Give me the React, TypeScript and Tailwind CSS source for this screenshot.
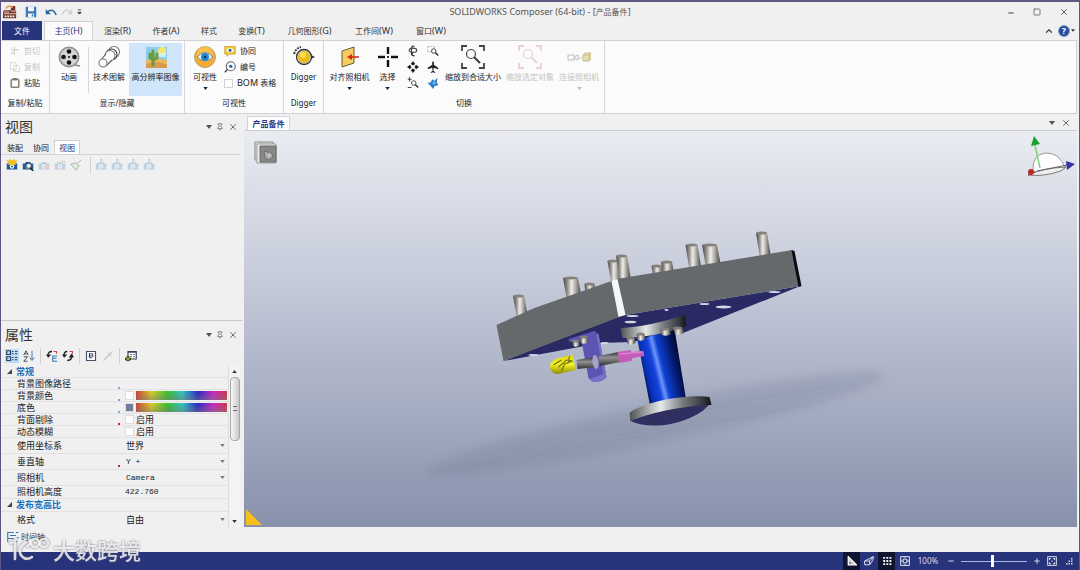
import { useState } from "react";
import type { ReactNode } from "react";
import { ChevronUp, Minus, Pin, Plus, Square, X } from "lucide-react";

const MENUS = [
  { label: "渲染", hotkey: "(R)", width: "w-[49px]" },
  { label: "作者", hotkey: "(A)", width: "w-[48px]" },
  { label: "样式", hotkey: "", width: "w-[38px]" },
  { label: "变换", hotkey: "(T)", width: "w-[47px]" },
  { label: "几何图形", hotkey: "(G)", width: "w-[69px]" },
  { label: "工作间", hotkey: "(W)", width: "w-[60px]" },
  { label: "窗口", hotkey: "(W)", width: "w-[54px]" },
];

const PINS = [
  { x: 519, y: 296, dx: 4, h: 22, w: 11 },
  { x: 571, y: 278, dx: 4, h: 22, w: 15 },
  { x: 590, y: 284, dx: 1, h: 10, w: 10 },
  { x: 613, y: 261, dx: 4, h: 23, w: 10 },
  { x: 622, y: 256, dx: 4, h: 25, w: 11 },
  { x: 667, y: 262, dx: 2, h: 13, w: 11 },
  { x: 657, y: 266, dx: 2, h: 11, w: 10 },
  { x: 692, y: 245, dx: 4, h: 25, w: 12 },
  { x: 710, y: 245, dx: 4, h: 22, w: 15 },
  { x: 762, y: 233, dx: 4, h: 25, w: 11 },
];

const BOLTS = [
  { x: 631, y: 338, dx: 1, h: 6, w: 8 },
  { x: 641, y: 334, dx: 1, h: 6, w: 8 },
  { x: 665, y: 329, dx: 2, h: 6, w: 9 },
  { x: 678, y: 328, dx: 2, h: 6, w: 9 },
  { x: 576, y: 341, dx: 1, h: 5, w: 7 },
  { x: 584, y: 337, dx: 1, h: 6, w: 8 },
];

type IconProps = { children: ReactNode; box?: string; className?: string };

function Icon({ children, box = "0 0 16 16", className = "size-3" }: IconProps) {
  return (
    <svg viewBox={box} className={`shrink-0 ${className}`} fill="none" aria-hidden="true">
      {children}
    </svg>
  );
}

function Caret({ className = "text-gray-600", size = "h-1 w-1.5" }: { className?: string; size?: string }) {
  return (
    <Icon box="0 0 6 4" className={`${size} ${className}`}>
      <path d="M0 0h6L3 4z" fill="currentColor" />
    </Icon>
  );
}

function BigButton({ icon, label, width, caret, disabled, active }: {
  icon: ReactNode; label: string; width: string; caret?: boolean; disabled?: boolean; active?: boolean;
}) {
  return (
    <button
      type="button"
      disabled={disabled}
      className={`flex h-[53px] shrink-0 flex-col items-center pt-0.5 ${width} ${active ? "bg-[#cfe6fa]" : ""} ${disabled ? "text-[#c4c4c4]" : "text-[#222]"}`}
    >
      <span className="flex h-6 items-center">{icon}</span>
      <span className="mt-0.5 whitespace-nowrap text-[8px] leading-3">{label}</span>
      {caret && <Caret size="h-[3px] w-[5px]" className={`mt-1 ${disabled ? "text-[#bbb]" : "text-[#1c2352]"}`} />}
    </button>
  );
}

function Group({ label, width, children }: { label: string; width: string; children: ReactNode }) {
  return (
    <section className={`flex shrink-0 flex-col border-r border-[#d8d8dc] ${width}`}>
      <div className="flex flex-1 justify-center pt-0.5">{children}</div>
      <h2 className="h-[17px] text-center text-[8px] leading-[14px]">{label}</h2>
    </section>
  );
}

function SmallButton({ icon, label, disabled }: { icon: ReactNode; label: ReactNode; disabled?: boolean }) {
  return (
    <button type="button" disabled={disabled} className={`flex h-4 items-center gap-1 whitespace-nowrap text-[8px] ${disabled ? "text-[#c4c4c4]" : ""}`}>
      {icon}
      {label}
    </button>
  );
}

function IconButton({ label, children }: { label: string; children: ReactNode }) {
  return (
    <button type="button" aria-label={label} className="flex h-4 w-5 items-center justify-center">
      {children}
    </button>
  );
}

function Magnifier({ color = "#444" }: { color?: string }) {
  return (
    <Icon box="0 0 24 24" className="size-6">
      <path d="M1 6V1h5M18 1h5v5M23 18v5h-5M6 23H1v-5" stroke={color} strokeWidth="1.8" />
      <circle cx="10" cy="9" r="4.5" stroke={color} strokeWidth="1.2" />
      <path d="m13 12 6 6" stroke={color} strokeWidth="2.2" />
    </Icon>
  );
}

function Ribbon() {
  return (
    <div className="mr-0.5 flex h-[74px] shrink-0 overflow-hidden border-y border-r border-[#d0d0d6] bg-[#fbfbfc] text-[#222]">
      <Group label="复制/粘贴" width="w-[49px]">
        <div className="flex flex-col">
          <SmallButton disabled label="剪切" icon={<Icon className="size-2.5"><path d="M7 1v13M1 6h13M5 10l-3 3" stroke="#ccc" strokeWidth="1.8" /></Icon>} />
          <SmallButton disabled label="复制" icon={<Icon className="size-2.5"><path d="M1 1h7l2 3v8H1zM6 5h6l3 3v7H6z" fill="#fff" stroke="#ccc" strokeWidth="1.3" /></Icon>} />
          <SmallButton label="粘贴" icon={<Icon className="size-2.5"><rect x="2" y="2" width="12" height="13" rx="2" fill="#fff" stroke="#8a826f" strokeWidth="2.6" /><path d="M5 0h6v4H5z" fill="#777" /></Icon>} />
        </div>
      </Group>
      <Group label="显示/隐藏" width="w-[135px]">
        <BigButton width="w-[38px]" label="动画" icon={
          <Icon box="0 0 24 24" className="size-6">
            <circle cx="12" cy="12" r="10" fill="#aaa" stroke="#888" />
            <circle cx="12" cy="12" r="8.5" fill="#d5d5d5" />
            <g fill="#111"><circle cx="12" cy="6.500" r="2.300" /><circle cx="12" cy="17.500" r="2.300" /><circle cx="6.5" cy="12" r="2.300" /><circle cx="17.500" cy="12" r="2.300" /><circle cx="12" cy="12" r="1" /></g>
            <path d="m18 20 5 1" stroke="#888" strokeWidth="1.5" />
          </Icon>
        } />
        <span className="mt-1 h-[46px] w-px bg-[#d8d8dc]" />
        <BigButton width="w-10" label="技术图解" icon={
          <Icon box="0 0 24 24" className="size-6">
            <g fill="#fff" stroke="#777" strokeWidth="1.1">
              <circle cx="17" cy="7" r="5.5" /><circle cx="14.5" cy="9.5" r="5.5" stroke="#333" /><circle cx="13" cy="10.5" r="5" />
              <path d="m3 15 7-7 6 6-7 7z" stroke="none" /><path d="m3 16 6-7M9 21l6-6" stroke="#555" /><circle cx="6" cy="18" r="4" />
            </g>
          </Icon>
        } />
        <BigButton width="w-[53px] mr-0.5" active label="高分辨率图像" icon={
          <Icon box="0 0 24 24" className="size-6">
            <path d="M2 2h21v21H2z" fill="#8fccea" />
            <path d="M2 15q10-3 21 0v8H2z" fill="#e9b75f" /><path d="M2 19q12-4 21 1v3H2z" fill="#d8984d" />
            <circle cx="18" cy="6" r="4" fill="#f7e56b" /><path d="M12 8h7l3-2v6h-8z" fill="#d9f2f5" opacity=".8" />
            <path d="M9 20V6M6 9v4l3 2 4-2V9" stroke="#6a9c3f" strokeWidth="3" strokeLinecap="round" />
          </Icon>
        } />
      </Group>
      <Group label="可视性" width="w-[99px]">
        <BigButton width="w-[38px]" caret label="可视性" icon={
          <Icon box="0 0 24 24" className="size-6">
            <circle cx="12" cy="12" r="10.5" fill="#f5a92d" stroke="#b7a27c" /><circle cx="12" cy="9" r="8" fill="#ffd368" opacity=".5" />
            <path d="M4 12q8-9 16 0-8 8-16 0z" fill="#eaf5fa" stroke="#74889b" /><circle cx="12" cy="12" r="4" fill="#2a8ac8" /><circle cx="12" cy="12" r="1.5" fill="#113a67" />
          </Icon>
        } />
        <div className="mr-0.5 flex w-[56px] flex-col">
          <SmallButton label="协同" icon={<Icon><path d="M1 2h14v10H7l-3 3v-3H1z" fill="#f3c843" stroke="#c99b20" /><ellipse cx="8" cy="7" rx="4.5" ry="2.7" fill="#fff" /><circle cx="8" cy="7" r="2" fill="#1b63a5" /></Icon>} />
          <SmallButton label="编号" icon={<Icon><circle cx="9" cy="7" r="6" fill="#fff" stroke="#667" strokeWidth="1.5" /><path d="m5 11-4 4" stroke="#333" strokeWidth="1.5" /><path d="M5 7q4-4 8 0-4 4-8 0z" fill="#bcdff3" /><circle cx="9" cy="7" r="2" fill="#205c9f" /></Icon>} />
          <label className="flex h-4 items-center gap-1 whitespace-nowrap text-[8px]">
            <input type="checkbox" className="size-[9px] shrink-0 appearance-none border border-[#d4d4d4] bg-white" />
            <span><span className="text-[9px]">BOM</span> 表格</span>
          </label>
        </div>
      </Group>
      <Group label="Digger" width="w-10">
        <BigButton width="w-9" label="Digger" icon={
          <Icon box="0 0 24 24" className="size-6">
            <circle cx="12" cy="12" r="7.500" fill="#ddd" stroke="#333" strokeWidth="1.3" /><circle cx="12" cy="12" r="6" fill="#edb916" /><circle cx="11" cy="10" r="3" fill="#ffdd54" />
            <path d="M2 9q2-6 7-7" stroke="#333" strokeWidth="1.800" strokeDasharray="2 1" /><path d="m19 10 4 2-4 2z" fill="#333" />
          </Icon>
        } />
      </Group>
      <Group label="切换" width="w-[281px]">
        <BigButton width="w-[46px]" caret label="对齐照相机" icon={
          <Icon box="0 0 24 24" className="size-6">
            <path d="m4 6 12-4v16L4 22z" fill="#f6cb60" stroke="#665c3c" /><path d="M21 12H11" stroke="#d42a18" strokeWidth="1.600" /><path d="m9 12 5-3v6z" fill="#d42a18" />
          </Icon>
        } />
        <BigButton width="w-[30px]" caret label="选择" icon={
          <Icon box="0 0 24 24" className="size-6"><path d="M12 2v7M12 15v7M2 12h7M15 12h7" stroke="#111" strokeWidth="2.4" /><path d="M11 11h2v2h-2z" fill="#333" /></Icon>
        } />
        <div className="grid grid-cols-2 content-start">
          <IconButton label="旋转"><Icon><path d="M10 2Q7 0 6 4v8q1 3 4 2M8 10l-2 3 4 2" stroke="#333" strokeWidth="1.5" /><ellipse cx="8" cy="7" rx="5" ry="2.800" stroke="#444" strokeWidth="1.5" /></Icon></IconButton>
          <IconButton label="缩放区域"><Icon><path d="M1 2h9v7H1z" stroke="#4a74ad" strokeDasharray="1 1.5" /><circle cx="9" cy="8" r="3" fill="#fff" stroke="#444" strokeWidth="1.3" /><path d="m11 10 4 4" stroke="#333" strokeWidth="2" /></Icon></IconButton>
          <IconButton label="平移"><Icon><g fill="#222"><path d="m8 0 3 4-3 2-3-2zM8 16l3-4-3-2-3 2zM0 8l4-3 2 3-2 3zM16 8l-4-3-2 3 2 3z" /></g></Icon></IconButton>
          <IconButton label="飞行"><Icon><path d="M8 0q2 2 1 5l6 4v2L9 9l-.5 4 2.5 2v1l-3-1-3 1v-1l2.5-2L7 9l-6 2V9l6-4q-1-3 1-5z" fill="#222" /></Icon></IconButton>
          <IconButton label="缩放"><Icon><path d="M1 3h5M3.500 0v6M1 14h5" stroke="#333" strokeWidth="1.2" /><circle cx="9" cy="8" r="3" stroke="#555" strokeWidth="1.3" /><path d="m11 10 4 4" stroke="#333" strokeWidth="2" /></Icon></IconButton>
          <IconButton label="漫游"><Icon><path d="m7 3 3 2 4-4-1 6 2 4-5 1-2 4-3-4-4-4 4-1z" fill="#2879c8" /><path d="m8 5 1 3-4 1 5 1 2-3z" fill="#7dbdec" /></Icon></IconButton>
        </div>
        <BigButton width="w-[61px]" label="缩放到合适大小" icon={<Magnifier />} />
        <BigButton width="w-[53px]" disabled label="缩放选定对象" icon={<Magnifier color="#ead2d2" />} />
        <BigButton width="w-[45px]" disabled caret label="连接照相机" icon={
          <Icon box="0 0 24 24" className="size-6"><path d="M1 10h6v5H1zM7 12l4-2v5l-4-2" stroke="#bbb" /><path d="M12 13h3" stroke="#aaa" strokeDasharray="1 1" /><path d="m16 10 2-2h6v6l-2 2h-6z" fill="#e6dfad" stroke="#c5bd90" /><path d="M16 10h6v6M22 10l2-2" stroke="#c5bd90" /></Icon>
        } />
      </Group>
    </div>
  );
}

function PanelTitle({ children }: { children: ReactNode }) {
  return (
    <div className="flex h-[22px] shrink-0 items-center justify-between px-1">
      <h2 className="text-[14px] leading-5 text-[#333]">{children}</h2>
      <div className="flex items-center gap-1 text-[#555]">
        <button type="button" aria-label="面板菜单" className="flex"><Caret /></button>
        <button type="button" aria-label="固定"><Pin className="size-2" /></button>
        <button type="button" aria-label="关闭"><X className="size-2.5" /></button>
      </div>
    </div>
  );
}

function CameraIcon({ faded, extra }: { faded?: boolean; extra?: ReactNode }) {
  const color = faded ? "#bfd0de" : "#205b93";
  return (
    <Icon>
      <path d="M1 6h3l1-2h6l1 2h3v8H1z" fill={color} />
      <circle cx="8" cy="10" r="3" fill="#f2f6f9" />
      <circle cx="8" cy="10" r="1.300" fill={color} />
      {extra}
    </Icon>
  );
}

function ViewsPanel() {
  const [tab, setTab] = useState("视图");
  return (
    <section className="flex min-h-0 flex-1 flex-col border-b border-[#c9c9cc] pt-px">
      <PanelTitle>视图</PanelTitle>
      <div className="mr-0.5 mt-px flex h-4 shrink-0 items-end border-b border-[#d5d5d5] pl-px text-[8px]">
        {["装配", "协同", "视图"].map((name) => (
          <button
            key={name}
            type="button"
            onClick={() => setTab(name)}
            className={`h-[14px] w-[26px] leading-[13px] ${tab === name ? "border border-b-0 border-[#d0d0d0] bg-white text-[#2b3a80]" : "text-[#222]"}`}
          >
            {name}
          </button>
        ))}
      </div>
      <div className="flex h-5 shrink-0 items-center gap-1 pl-[5px]">
        <button type="button" aria-label="创建视图"><CameraIcon extra={<path d="m8 2 3-2 1 2h4l-4 4 1 2H3l1-2-4-4h4l1-2z" fill="#f2bd20" />} /></button>
        <button type="button" aria-label="创建照相机视图"><CameraIcon extra={<><circle cx="9" cy="9" r="3.500" fill="#dce9f4" stroke="#234" /><path d="m11 12 4 4" stroke="#123" strokeWidth="2" /></>} /></button>
        <button type="button" aria-label="更新视图"><CameraIcon faded extra={<circle cx="12" cy="11" r="3" fill="#edc9ce" />} /></button>
        <button type="button" aria-label="更新多个视图"><CameraIcon faded extra={<path d="M9 2h6v4H9z" fill="#eadbdb" />} /></button>
        <button type="button" aria-label="绘制"><Icon><path d="m1 7 7-2 4 4-4 6zM10 6l5-5" fill="#e6eae2" stroke="#aab5aa" strokeWidth="1.300" /></Icon></button>
        <span className="ml-1 h-4 w-px bg-[#d0d0d0]" />
        {["第一", "上一", "下一", "最后"].map((name) => (
          <button key={name} type="button" aria-label={name}><CameraIcon faded extra={<path d="M7 0h3v3H7z" fill="#bfd0de" />} /></button>
        ))}
      </div>
      <div className="flex-1" />
    </section>
  );
}

const ROW = "flex shrink-0 items-center border-b border-[#e2e2e4]";

function PropRow({ label, height = "h-3", dot, htmlFor, children }: {
  label: string; height?: string; dot?: string; htmlFor?: string; children?: ReactNode;
}) {
  return (
    <div className={`${ROW} ${height}`}>
      <label htmlFor={htmlFor} className="flex w-[124px] shrink-0 items-end pl-4">
        <span className="flex-1">{label}</span>
        {dot && <span className={`mr-[5px] size-0.5 ${dot}`} />}
      </label>
      {children}
    </div>
  );
}

function ColorValue({ id, swatch }: { id: string; swatch: string }) {
  return (
    <button id={id} type="button" className="mr-px flex h-[9px] flex-1 gap-0.5">
      <span className={`w-[9px] border border-[#ddd] ${swatch}`} />
      <span className="flex-1 bg-[linear-gradient(to_bottom,transparent,#7778),linear-gradient(to_right,#d43c35,#dfcf22_17%,#35c42c_35%,#32c5c9_51%,#2424c8_68%,#cf25c9_85%,#d53343)]" />
    </button>
  );
}

function CheckValue({ id }: { id: string }) {
  return (
    <span className="flex items-center gap-0.5">
      <input id={id} type="checkbox" className="size-[9px] appearance-none border border-[#ddd] bg-white" />
      启用
    </span>
  );
}

function SelectValue({ id, option, mono }: { id: string; option: string; mono?: boolean }) {
  return (
    <span className="flex flex-1 items-center pr-[3px]">
      <select id={id} className={`min-w-0 flex-1 appearance-none bg-transparent pl-px ${mono ? "font-['Liberation_Mono',monospace] text-[8px]" : ""}`}>
        <option>{option}</option>
      </select>
      <Caret size="h-[3px] w-[5px]" className="text-[#777]" />
    </span>
  );
}

function Section({ children, height }: { children: ReactNode; height: string }) {
  return (
    <button type="button" className={`${ROW} ${height} w-full gap-1 pl-1.5 font-bold text-[#1a72bb]`}>
      <Icon box="0 0 6 6" className="size-[5px]"><path d="M6 0v6H0z" fill="#444" /></Icon>
      {children}
    </button>
  );
}

function PropertiesPanel() {
  return (
    <section className="flex min-h-0 flex-1 flex-col pt-[3px]">
      <PanelTitle>属性</PanelTitle>
      <div className="flex h-5 shrink-0 items-center gap-1 pl-1">
        <button type="button" aria-label="分类" className="bg-[#bcdcf5] p-px"><Icon><path d="M1 1h5v5H1zM1 9h5v5H1zM8 2h2M12 2h3M8 5h2M12 5h3M8 10h2M12 10h3M8 13h2M12 13h3" stroke="#23405f" strokeWidth="1.600" /></Icon></button>
        <button type="button" aria-label="按字母排序">
          <Icon><g stroke="#345" strokeWidth="1.200"><path d="m1 7 3-6 3 6M2 5h4M1 9h5l-5 6h5" /><path d="M12 1v12M9 10l3 4 3-4" stroke="#3869a8" /></g></Icon>
        </button>
        <span className="mx-px h-4 w-px bg-[#d0d0d0]" />
        <button type="button" aria-label="重置"><Icon><path d="M8 2Q2 2 3 8M1 6l2 3 3-3" stroke="#222" strokeWidth="1.800" /><path d="M10 2h4v3" stroke="#c44" strokeWidth="1.500" /><path d="M15 8H9v7h6M9 11h5" stroke="#347fb7" strokeWidth="1.500" /></Icon></button>
        <button type="button" aria-label="刷新"><Icon><path d="M7 2Q2 2 3 8M1 6l2 3 3-3M7 14q6 0 6-6M10 10l3-4 2 4" stroke="#222" strokeWidth="1.800" /><path d="M10 2h4v3" stroke="#c44" strokeWidth="1.500" /></Icon></button>
        <span className="mx-px h-4 w-px bg-[#d0d0d0]" />
        <button type="button" aria-label="设为默认"><Icon><path d="M2 2h12v12H2z" fill="#fff" stroke="#456" strokeWidth="1.600" /><path d="M7 5h3q2 4-2 6-4-1-2-4M6 4v4h3" stroke="#235" strokeWidth="1.300" /></Icon></button>
        <button type="button" aria-label="拾取" className="ml-px"><Icon><path d="m2 14 8-8M8 4l4 4M11 5l3-3" stroke="#c8c8c8" strokeWidth="1.800" /></Icon></button>
        <span className="mx-px h-4 w-px bg-[#d0d0d0]" />
        <button type="button" aria-label="添加元属性"><Icon><path d="M4 2h11v10H4z" fill="#fff" stroke="#345" strokeWidth="1.500" /><path d="M4 3h11M7 6h2M11 6h2M7 9h2M11 9h2" stroke="#345" strokeWidth="1.500" /><path d="M4 8v7M0 12h8" stroke="#222" strokeWidth="3.500" /><path d="M4 9v5M1 12h6" stroke="#b2ca29" strokeWidth="1.500" /></Icon></button>
      </div>
      <div className="flex min-h-0 flex-1 text-[9px] leading-[11px] text-[#222]">
        <div className="min-w-0 flex-1 overflow-hidden">
          <Section height="h-3">常规</Section>
          <PropRow label="背景图像路径" dot="bg-[#7fa6da]" />
          <PropRow label="背景颜色" dot="bg-[#7fa6da]" htmlFor="bg-color"><ColorValue id="bg-color" swatch="bg-white" /></PropRow>
          <PropRow label="底色" dot="bg-[#7fa6da]" htmlFor="base-color"><ColorValue id="base-color" swatch="bg-[#727d99]" /></PropRow>
          <PropRow label="背面剔除" dot="bg-[#d2202e]" htmlFor="culling"><CheckValue id="culling" /></PropRow>
          <PropRow label="动态模糊" htmlFor="blur"><CheckValue id="blur" /></PropRow>
          <PropRow label="使用坐标系" height="h-4" htmlFor="axes"><SelectValue id="axes" option="世界" /></PropRow>
          <PropRow label="垂直轴" height="h-4" dot="bg-[#d2202e]" htmlFor="vertical"><SelectValue id="vertical" option="Y +" mono /></PropRow>
          <PropRow label="照相机" height="h-4" htmlFor="camera"><SelectValue id="camera" option="Camera" mono /></PropRow>
          <PropRow label="照相机高度" height="h-[13px]" htmlFor="camera-height">
            <input id="camera-height" defaultValue="422.760" className="min-w-0 flex-1 bg-transparent font-['Liberation_Mono',monospace] text-[8px]" />
          </PropRow>
          <Section height="h-[13px]">发布宽高比</Section>
          <PropRow label="格式" height="h-4" htmlFor="format"><SelectValue id="format" option="自由" /></PropRow>
        </div>
        <div className="mr-0.5 flex w-3 shrink-0 flex-col items-center border-l border-[#ddd] bg-[#f3f3f3]">
          <Caret size="h-[3px] w-[5px]" className="my-1 rotate-180 text-[#333]" />
          <div className="flex h-16 w-2.5 items-center justify-center rounded-sm border border-[#a5a5a8] bg-linear-to-r from-[#f7f7f7] to-[#c9c9cc]">
            <span className="h-[5px] w-1 border-y border-[#875f66]" />
          </div>
          <Caret size="h-[3px] w-[5px]" className="mb-1 mt-auto text-[#333]" />
        </div>
      </div>
    </section>
  );
}

function Cylinder({ x, y, dx, h, w }: { x: number; y: number; dx: number; h: number; w: number }) {
  const r = w / 2;
  return (
    <g>
      <path d={`M${x - r} ${y}L${x + dx - r} ${y + h}Q${x + dx} ${y + h + 2} ${x + dx + r} ${y + h - 1}L${x + r} ${y}z`} fill="url(#steel)" />
      <ellipse cx={x} cy={y} rx={r} ry="1.500" fill="#85827e" />
    </g>
  );
}

function Model() {
  return (
    <svg viewBox="245 131 832 396" className="h-full w-full" role="img" aria-label="产品备件模型">
      <defs>
        <linearGradient id="steel">
          <stop stopColor="#45423f" /><stop offset=".22" stopColor="#8f8c88" /><stop offset=".45" stopColor="#efede9" /><stop offset=".65" stopColor="#b5b2ad" /><stop offset="1" stopColor="#3c3936" />
        </linearGradient>
        <linearGradient id="flange">
          <stop stopColor="#4d5052" /><stop offset=".38" stopColor="#e8eaea" /><stop offset=".65" stopColor="#777b7e" /><stop offset=".9" stopColor="#33363a" /><stop offset="1" stopColor="#111" />
        </linearGradient>
        <linearGradient id="shaft" gradientUnits="userSpaceOnUse" x1="643" y1="377" x2="684" y2="367">
          <stop stopColor="#04124d" /><stop offset=".12" stopColor="#0530b8" /><stop offset=".32" stopColor="#1544dd" /><stop offset=".42" stopColor="#6d95f5" /><stop offset=".52" stopColor="#1041d4" /><stop offset=".8" stopColor="#041a70" /><stop offset="1" stopColor="#010824" />
        </linearGradient>
        <linearGradient id="rod" x2="0" y2="1">
          <stop stopColor="#333" /><stop offset=".4" stopColor="#929292" /><stop offset="1" stopColor="#303033" />
        </linearGradient>
        <linearGradient id="yellow" x2="0" y2="1">
          <stop stopColor="#dddb16" /><stop offset=".5" stopColor="#f2ef25" /><stop offset="1" stopColor="#8d8b08" />
        </linearGradient>
        <filter id="soft" x="-10%" y="-100%" width="120%" height="300%">
          <feGaussianBlur stdDeviation="5" />
        </filter>
      </defs>
      <ellipse cx="655" cy="424" rx="235" ry="20" fill="#69718a" opacity=".22" transform="rotate(-12 655 424)" filter="url(#soft)" />
      <g stroke="#747e96" strokeWidth=".6" opacity=".16">
        <path d="m435 472 430-86M470 468l370-70M490 464l320-58M520 444l310-58M560 434l240-44" />
        <path d="m520 450 50 10M560 440l60 13M600 430l70 13M650 418l65 12M700 407l60 12M750 396l50 10" />
      </g>
      {PINS.map((pin) => <Cylinder key={pin.x} {...pin} />)}
      <path d="m504 361 115-45 7-1 175-29-115 46-54 10-31 1z" fill="#292963" />
      <path d="m497 325 38-17 77-27 8 36-116 44z" fill="#65696c" />
      <path d="m617 279 176-29 8 36-175 29z" fill="#65696c" />
      <path d="m612 281 6-2 8 36-7 2z" fill="#f6f6f7" />
      <path d="m792 250 3 1 7 35-3 1z" fill="#090a12" />
      <g fill="#d5d5e8">
        <ellipse cx="534" cy="355" rx="5" ry="1" /><ellipse cx="633" cy="316" rx="6" ry="1" /><ellipse cx="631" cy="322" rx="6" ry="1.300" />
        <ellipse cx="705" cy="304" rx="5" ry="1" /><ellipse cx="724" cy="307" rx="8" ry="1.400" /><ellipse cx="775" cy="292" rx="6" ry="1" />
        <ellipse cx="605" cy="343" rx="4" ry="1" /><ellipse cx="667" cy="310" rx="2" ry="1" />
      </g>
      <path d="m638 340 37-11 12 73q-16 8-36 6z" fill="url(#shaft)" />
      <path d="M621 328q27-1 64-13l2 11q-29 11-64 12z" fill="url(#flange)" />
      {BOLTS.slice(0, 4).map((bolt) => <Cylinder key={bolt.x} {...bolt} />)}
      <path d="m569 339 26-8 4 3 8 43q-3 5-14 5l-4-4-7-37-12 1z" fill="#5e55b2" />
      <path d="m599 334 8 43q-3 5-14 5l-3-3 14-5-7-39z" fill="#7770c4" />
      <Cylinder {...BOLTS[4]} />
      <Cylinder {...BOLTS[5]} />
      <path d="m577 360 18-3 2 10-19 2z" fill="url(#rod)" />
      <ellipse cx="596" cy="362" rx="3" ry="7" fill="#a5a2c9" transform="rotate(-8 596 362)" />
      <path d="m599 356 20-4 2 10-21 4z" fill="url(#rod)" />
      <path d="m618 352 13-2 1 2 12-1 1 5-12 2-1 3-12 2z" fill="#c65cba" />
      <path d="m620 354 23-2" stroke="#dc82d0" strokeWidth="1.500" />
      <path d="M551 370q-3-8 8-12l14-3 1 4 2 11-13 3q-8 3-12-3z" fill="url(#yellow)" />
      <path d="m559 367 8-7 6 1M562 371l3-7 8-3M554 365l8-5M570 356l-1 6" stroke="#716e08" strokeWidth="1.100" fill="none" />
      <path d="M631 419c15-10 58-17 80-16-14 19-57 29-80 18z" fill="#2f2f61" />
      <path d="M630 413c15-12 60-19 80-16l2 8c-20 0-57 6-81 16z" fill="url(#flange)" />
    </svg>
  );
}

function Viewport() {
  return (
    <main className="relative min-h-0 flex-1 overflow-hidden bg-[linear-gradient(#eaecf2,#c3c8d8_40%,#8791ab)]">
      <Model />
      <button type="button" aria-label="模式" className="absolute left-2.5 top-2.5">
        <Icon box="0 0 24 24" className="size-6">
          <path d="M1 1h18v18H1z" fill="#ddd" stroke="#888" /><path d="M3 3h19v19H3z" fill="#f2f2f2" stroke="#999" /><path d="M6 5h16v16H6z" fill="#888" stroke="#666" />
          <path d="m10 11 3-1 1 3 4-1 1 4-4 3-4-2z" fill="#a9a9a9" stroke="#666" strokeWidth=".8" /><circle cx="15" cy="14" r="2" fill="#c4c4c4" />
        </Icon>
      </button>
      <svg viewBox="0 0 54 46" className="absolute right-0 top-0.5 h-[46px] w-[54px]" role="img" aria-label="坐标轴">
        <path d="M10 38q-1-17 13-18 14 0 19 15-13 8-32 3z" fill="#fff" stroke="#999" />
        <path d="M5 42q15-7 38-8l-5 4q-18 6-33 4z" fill="#eee" stroke="#777" />
        <path d="m17 35-5-23" stroke="#7ad57a" strokeWidth="1.500" /><path d="m11 3 6 8-9 2z" fill="#16a12a" />
        <path d="m14 38 30-6" stroke="#666" /><path d="m43 28 9 3-8 6z" fill="#3434a6" />
        <circle cx="8" cy="39" r="3" fill="#bc2727" /><path d="m7 38 5 1-7 4z" fill="#bc2727" />
      </svg>
      <button type="button" aria-label="纸张角" className="absolute bottom-0.5 left-0.5 flex">
        <Icon className="size-4"><path d="M0 0v16h16z" fill="#f9be19" /></Icon>
      </button>
    </main>
  );
}

function StatusBar() {
  return (
    <footer className="flex h-[18px] shrink-0 items-center justify-end bg-[#27337b] pr-1.5 text-[8px] text-[#d5d9ef]">
      <button type="button" aria-label="技术图解模式" className="flex h-full w-[17px] items-center justify-center bg-[#10142f]"><Icon className="size-2.5"><path d="M2 1v13h13z" stroke="#fff" strokeWidth="2" fill="#ccd" /><path d="M4 9v3h3z" fill="#10142f" /></Icon></button>
      <button type="button" aria-label="设计模式" className="flex h-full w-[18px] items-center justify-center"><Icon className="size-2.5"><path d="M1 8h8v6H1zM1 8l6-3 8-4-1 6-5 7M9 8l6-7" stroke="#dde" strokeWidth="1.600" /></Icon></button>
      <button type="button" aria-label="网格" className="flex h-full w-[17px] items-center justify-center bg-[#10142f]"><Icon className="size-2.5"><path d="M2 3h13M2 8h13M2 13h13" stroke="#fff" strokeWidth="3" strokeDasharray="3 2" /></Icon></button>
      <button type="button" aria-label="纸张" className="flex h-full w-5 items-center justify-center"><Icon className="size-2.5"><path d="M1 1h14v14H1zM5 5h6v6H5zM1 8h4M11 8h4M8 1v2M8 13v2" stroke="#e2e5f5" strokeWidth="1.600" /></Icon></button>
      <span className="w-[26px] text-center">100%</span>
      <button type="button" aria-label="缩小" className="ml-1 mr-1 p-0.5"><Minus className="size-2" strokeWidth={3} /></button>
      <input
        type="range"
        aria-label="缩放比例"
        defaultValue="48"
        className="h-3 w-[66px] appearance-none bg-[linear-gradient(#aeb7dd,#aeb7dd)] bg-[length:100%_1px] bg-center bg-no-repeat [&::-webkit-slider-thumb]:h-3 [&::-webkit-slider-thumb]:w-[3px] [&::-webkit-slider-thumb]:appearance-none [&::-webkit-slider-thumb]:bg-white"
      />
      <button type="button" aria-label="放大" className="ml-1 mr-1 p-0.5"><Plus className="size-2" strokeWidth={3} /></button>
      <button type="button" aria-label="适合窗口" className="mr-2"><Icon className="size-2.5"><path d="M1 1h14v14H1z" stroke="#e2e5f5" strokeWidth="1.500" /><path d="M3 3h4L3 7zM13 3H9l4 4zM3 13h4L3 9zM13 13H9l4-4z" fill="#e2e5f5" /><path d="M7 7h2v2H7z" fill="#e2e5f5" /></Icon></button>
      <Icon className="size-2"><path d="M12 2h3v3h-3zM7 7h3v3H7zM12 7h3v3h-3zM2 12h3v3H2zM7 12h3v3H7zM12 12h3v3h-3z" fill="#d5d9ef" /></Icon>
    </footer>
  );
}

export default function App() {
  return (
    <div className="relative flex h-screen flex-col overflow-hidden border-x border-t-2 border-[#5d5683] bg-[#f0f0f1] font-['Noto_Sans','Noto_Sans_CJK_SC',sans-serif] text-[#333]">
      <header className="flex h-[19px] shrink-0 items-center px-0.5">
        <div className="flex flex-1 items-center gap-1">
          <Icon className="size-3.5"><path d="M1 6h8V1h5v5h1v9H0V8z" fill="#743326" /><path d="M3 4q4-5 8-1" stroke="#e4a062" strokeWidth="2" /><path d="M1 8h6M9 7h6M1 10h14" stroke="#ecd7c5" /><path d="M2 13h12" stroke="#fff" strokeWidth="2" strokeDasharray="2 1" /></Icon>
          <button type="button" aria-label="保存" className="ml-1"><Icon><path d="M1 1h14v14H1z" fill="#3a78b8" /><path d="M4 1h8v6H4zM4 10h8v5H4z" fill="#f4f8fc" /><path d="M9 11h2v3H9z" fill="#3a78b8" /></Icon></button>
          <button type="button" aria-label="撤消" className="ml-1"><Icon><path d="M3 8q8-6 12 4" stroke="#28679d" strokeWidth="2" /><path d="M1 4v7h7z" fill="#28679d" /></Icon></button>
          <button type="button" aria-label="重做" disabled><Icon><path d="M13 8Q5 2 1 12" stroke="#cfd4d9" strokeWidth="2" /><path d="M15 4v7H8z" fill="#cfd4d9" /></Icon></button>
          <button type="button" aria-label="自定义快速访问工具栏"><Icon box="0 0 6 7" className="h-1.5 w-[5px]"><path d="M1 1h4M1 4h4L3 6z" stroke="#333" fill="#333" /></Icon></button>
        </div>
        <h1 className="pl-2 text-[9px] text-[#555]">SOLIDWORKS Composer (64-bit) - [<span className="text-[8px]">产品备件</span>]</h1>
        <div className="flex flex-1 items-center justify-end gap-[18px] pr-2 text-[#444]">
          <button type="button" aria-label="最小化"><Minus className="mt-0.5 size-2" strokeWidth={3} /></button>
          <button type="button" aria-label="最大化"><Square className="size-2" /></button>
          <button type="button" aria-label="关闭"><X className="size-2.5" /></button>
        </div>
      </header>
      <nav className="flex h-[19px] shrink-0 items-stretch pl-px text-[8px]">
        <button type="button" className="w-10 bg-[#27337b] text-white">文件</button>
        <button type="button" className="ml-0.5 w-[49px] border border-b-0 border-[#d0d0d6] bg-[#fbfbfc] text-[#2b3a80]">主页<span className="text-[9px]">(H)</span></button>
        <div className="flex">
          {MENUS.map((m) => (
            <button key={m.label} type="button" className={`whitespace-nowrap ${m.width}`}>
              {m.label}<span className="text-[9px]">{m.hotkey}</span>
            </button>
          ))}
        </div>
        <div className="ml-auto flex items-center gap-1 pr-1">
          <button type="button" aria-label="折叠功能区"><ChevronUp className="size-2.5 text-[#444]" strokeWidth={3} /></button>
          <button type="button" aria-label="帮助" className="flex items-center gap-px">
            <span className="flex size-3 items-center justify-center rounded-full border border-[#8ba0c5] bg-[#234a9b] text-[9px] font-bold leading-none text-white">?</span>
            <Caret size="h-[3px] w-1" className="text-[#333]" />
          </button>
        </div>
      </nav>
      <Ribbon />
      <div className="flex min-h-0 flex-1 pt-px">
        <aside className="flex w-[241px] shrink-0 flex-col">
          <ViewsPanel />
          <PropertiesPanel />
        </aside>
        <div className="ml-0.5 mr-0.5 flex min-w-0 flex-1 flex-col">
          <div className="flex h-4 shrink-0 items-end justify-between border-b border-[#c8ccd6] pl-[3px] pr-1.5">
            <button type="button" className="h-[14px] w-[43px] border border-b-0 border-[#d0d4dc] bg-white text-[8px] font-bold leading-3 text-[#2b3a80]">产品备件</button>
            <div className="flex h-full items-center gap-1.5 text-[#555]">
              <button type="button" aria-label="窗口列表" className="flex"><Caret /></button>
              <button type="button" aria-label="关闭文档"><X className="size-2.5" /></button>
            </div>
          </div>
          <Viewport />
        </div>
      </div>
      <div className="flex h-[25px] shrink-0 items-start pl-1.5 pt-1">
        <button type="button" className="flex items-center gap-0.5 text-[8px]">
          <Icon><path d="M1 1v14M1 2h8M4 6h8M1 10h8M6 14h8M12 2h3M13 9h3" stroke="#3978ae" strokeWidth="1.500" /></Icon>
          时间轴
        </button>
      </div>
      <StatusBar />
      <div className="pointer-events-none absolute bottom-2 left-2 flex items-end gap-0.5 text-white/80 drop-shadow-[0_0_1px_#556]">
        <Icon box="0 0 42 26" className="h-[26px] w-[42px]">
          <g stroke="currentColor" strokeWidth="2.600" strokeLinecap="round">
            <path d="m2 7 4-2v18M23 21q-4 3-8 1-5-3-4-9 1-4 5-6M18 10l3-2V4" /><circle cx="26" cy="7" r="4" /><circle cx="35" cy="7" r="4" />
          </g>
        </Icon>
        <span className="text-[22px] font-medium leading-6">大数跨境</span>
      </div>
    </div>
  );
}
